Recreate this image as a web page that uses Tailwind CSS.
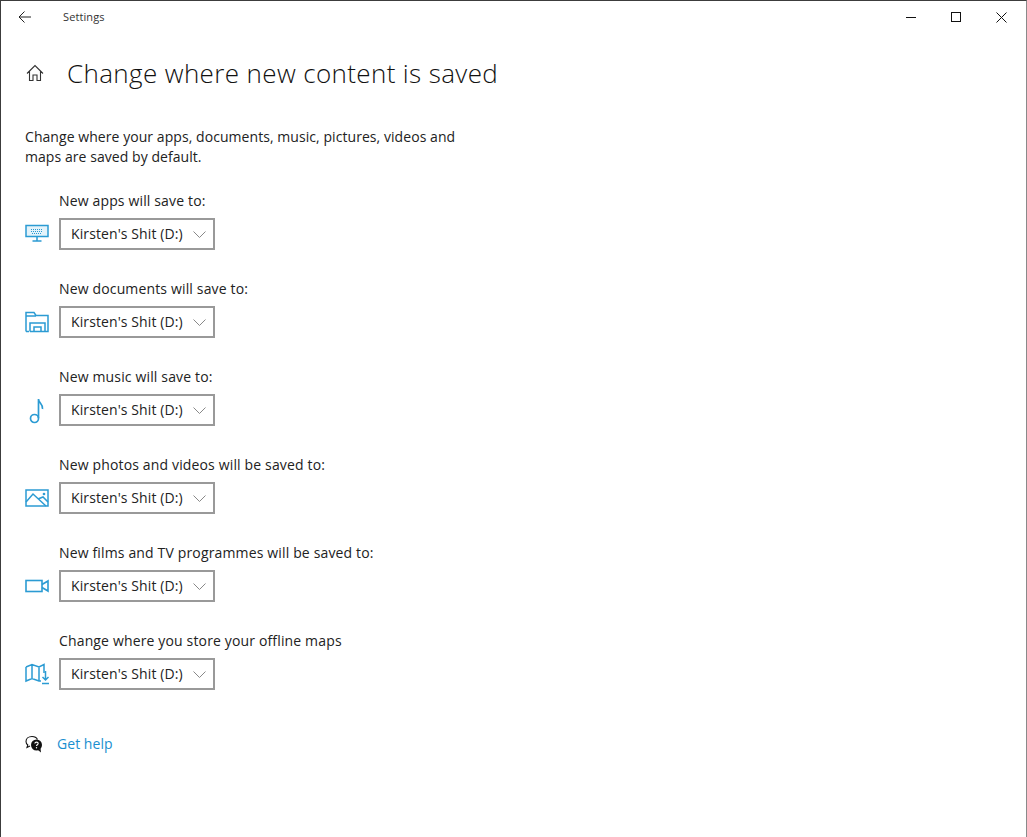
<!DOCTYPE html>
<html lang="en">
  <head>
    <meta charset="UTF-8" />
    <title>Settings</title>
    <script src="https://cdn.jsdelivr.net/npm/@tailwindcss/browser@4"></script>
  </head>
  <body class="bg-white text-[#1a1a1a] font-['Open_Sans',sans-serif]">
    <div class="w-[1027px] h-[837px] overflow-hidden bg-white border-l border-t border-r border-l-[#3c3c3c] border-t-[#3c3c3c] border-r-[#8a8a8a]">
      <!-- Title bar -->
      <div class="flex items-center h-[32px]">
        <div class="w-[62px] pl-[16px] flex">
          <svg width="16" height="14" viewBox="0 0 16 14" fill="none" stroke="#222" stroke-width="1"><path d="M14 7H2M7.500 1.500 2 7l5.500 5.500" /></svg>
        </div>
        <span class="text-[11px] tracking-[0.1px] text-[#333]">Settings</span>
        <div class="ml-auto flex items-center gap-[35px] pr-[19px]">
          <svg width="10" height="10" viewBox="0 0 10 10" stroke="#111" fill="none"><path d="M0 5.500H10" /></svg>
          <svg width="10" height="10" viewBox="0 0 10 10" stroke="#111" fill="none"><rect x="0.500" y="0.500" width="9" height="9" /></svg>
          <svg width="11" height="11" viewBox="0 0 11 11" stroke="#111" fill="none"><path d="M.5.500l10 10M10.500.500l-10 10" /></svg>
        </div>
      </div>

      <!-- Page header -->
      <div class="flex items-center h-[38px] mt-[21px] pl-[25px]">
        <svg width="18" height="18" viewBox="0 0 18 18" fill="none" stroke="#333" stroke-width="1.100" class="mr-[23px]"><path d="M1 9.500 9 1.500l8 8M3.500 7.500V16.500H7V11h4v5.500h3.500V7.500" /></svg>
        <h1 class="text-[26px] font-light tracking-[0.37px] text-[#111]">Change where new content is saved</h1>
      </div>

      <p class="mt-[35px] ml-[24px] text-[14px] leading-[20px] w-[450px] tracking-[0.06px] text-[#222]">Change where your apps, documents, music, pictures, videos and maps are saved by default.</p>

      <!-- Save locations -->
      <div class="mt-[24px] ml-[24px] flex flex-col gap-[29px]">
        <div>
          <div class="ml-[34px] h-[20px] text-[14px] leading-[20px] tracking-[0.15px] text-[#222]">New apps will save to:</div>
          <div class="flex items-center mt-[7px]">
            <div class="w-[34px]">
              <svg width="24" height="20" viewBox="0 0 24 20" fill="none" stroke="#2b9bd3" stroke-width="1.500"><rect x="1" y="1.500" width="22" height="11" fill="#e4f3fa" /><path d="M12 12.500V17M7.500 17h9" /><path d="M6 5.500h12M6 7.500h12M7 9.500h10" stroke-width="1.200" stroke-dasharray="1 1" /></svg>
            </div>
            <button class="w-[156px] h-[32px] border-2 border-[#999] flex items-center pl-[10px] pb-[2px] text-[14px] tracking-[0.1px] text-[#222]">Kirsten's Shit (D:)<svg class="ml-auto mr-[7px] mt-[2px]" width="13" height="7" viewBox="0 0 13 7" fill="none" stroke="#888"><path d="M.5.500l6 6 6-6" /></svg></button>
          </div>
        </div>
        <div>
          <div class="ml-[34px] h-[20px] text-[14px] leading-[20px] tracking-[0.15px] text-[#222]">New documents will save to:</div>
          <div class="flex items-center mt-[7px]">
            <div class="w-[34px]">
              <svg width="24" height="22" viewBox="0 0 24 22" fill="none" stroke="#2b9bd3" stroke-width="1.500"><path d="M1 20.500V1.500h8l2 3h12v16h-3M1 20.500h3M1 5h10" /><path d="M5 20.500V12h15v8.500M9 20.500V16h7v4.500M5 20.500h15" /></svg>
            </div>
            <button class="w-[156px] h-[32px] border-2 border-[#999] flex items-center pl-[10px] pb-[2px] text-[14px] tracking-[0.1px] text-[#222]">Kirsten's Shit (D:)<svg class="ml-auto mr-[7px] mt-[2px]" width="13" height="7" viewBox="0 0 13 7" fill="none" stroke="#888"><path d="M.5.500l6 6 6-6" /></svg></button>
          </div>
        </div>
        <div>
          <div class="ml-[34px] h-[20px] text-[14px] leading-[20px] tracking-[0.15px] text-[#222]">New music will save to:</div>
          <div class="flex items-center mt-[7px]">
            <div class="w-[34px]">
              <svg width="24" height="28" viewBox="0 0 24 28" fill="none" stroke="#2b9bd3" stroke-width="1.700"><circle cx="9.500" cy="22.500" r="4" /><path d="M13.500 22V3c0 4 5 5 4 10" /></svg>
            </div>
            <button class="w-[156px] h-[32px] border-2 border-[#999] flex items-center pl-[10px] pb-[2px] text-[14px] tracking-[0.1px] text-[#222]">Kirsten's Shit (D:)<svg class="ml-auto mr-[7px] mt-[2px]" width="13" height="7" viewBox="0 0 13 7" fill="none" stroke="#888"><path d="M.5.500l6 6 6-6" /></svg></button>
          </div>
        </div>
        <div>
          <div class="ml-[34px] h-[20px] text-[14px] leading-[20px] tracking-[0.15px] text-[#222]">New photos and videos will be saved to:</div>
          <div class="flex items-center mt-[7px]">
            <div class="w-[34px]">
              <svg width="24" height="18" viewBox="0 0 24 18" fill="none" stroke="#2b9bd3" stroke-width="1.500"><rect x="1" y="1" width="22" height="16" /><path d="M1 13l7-8 13 12M13 10l5-2 5 5" /><circle cx="19" cy="5" r=".6" /></svg>
            </div>
            <button class="w-[156px] h-[32px] border-2 border-[#999] flex items-center pl-[10px] pb-[2px] text-[14px] tracking-[0.1px] text-[#222]">Kirsten's Shit (D:)<svg class="ml-auto mr-[7px] mt-[2px]" width="13" height="7" viewBox="0 0 13 7" fill="none" stroke="#888"><path d="M.5.500l6 6 6-6" /></svg></button>
          </div>
        </div>
        <div>
          <div class="ml-[34px] h-[20px] text-[14px] leading-[20px] tracking-[0.15px] text-[#222]">New films and TV programmes will be saved to:</div>
          <div class="flex items-center mt-[7px]">
            <div class="w-[34px]">
              <svg width="24" height="14" viewBox="0 0 24 14" fill="none" stroke="#2b9bd3" stroke-width="1.600"><rect x="1" y="1.500" width="16" height="11" /><path d="M17 5.500 23 2v10l-6-3.500" /></svg>
            </div>
            <button class="w-[156px] h-[32px] border-2 border-[#999] flex items-center pl-[10px] pb-[2px] text-[14px] tracking-[0.1px] text-[#222]">Kirsten's Shit (D:)<svg class="ml-auto mr-[7px] mt-[2px]" width="13" height="7" viewBox="0 0 13 7" fill="none" stroke="#888"><path d="M.5.500l6 6 6-6" /></svg></button>
          </div>
        </div>
        <div>
          <div class="ml-[34px] h-[20px] text-[14px] leading-[20px] tracking-[0.15px] text-[#222]">Change where you store your offline maps</div>
          <div class="flex items-center mt-[7px]">
            <div class="w-[34px]">
              <svg width="25" height="22" viewBox="0 0 25 22" fill="none" stroke="#2b9bd3" stroke-width="1.500"><path d="M1 4 7 1.500l7 2.500 5-2.500V10M14 4v14M7 1.500v14M1 4v14l6-2.500 7 2.500h2" /><path d="M20.500 8v9M17.500 14l3 3 3-3M17 20.500h7" /></svg>
            </div>
            <button class="w-[156px] h-[32px] border-2 border-[#999] flex items-center pl-[10px] pb-[2px] text-[14px] tracking-[0.1px] text-[#222]">Kirsten's Shit (D:)<svg class="ml-auto mr-[7px] mt-[2px]" width="13" height="7" viewBox="0 0 13 7" fill="none" stroke="#888"><path d="M.5.500l6 6 6-6" /></svg></button>
          </div>
        </div>
      </div>

      <!-- Help -->
      <div class="flex items-center mt-[44px] ml-[24px]">
        <svg width="18" height="18" viewBox="0 0 18 18" class="mr-[14px]"><path d="M7 1.500C3.500 1.500 1 3.500 1 6.500c0 1.500.7 2.700 1.800 3.500L2 12.500l3-1.500" fill="none" stroke="#111" stroke-width="1.100" /><path d="M7 1.500c2.500 0 4.500 1 5.500 3" fill="none" stroke="#111" stroke-width="1.100" /><circle cx="11.500" cy="10" r="5.500" fill="#111" /><path d="M13 15l3 2.500-.5-4z" fill="#111" /><path d="M9.800 8.500c.2-1.800 3.400-1.800 3.400 0 0 1.200-1.700 1.200-1.700 2.500" fill="none" stroke="#fff" stroke-width="1.100" /><circle cx="11.500" cy="12.800" r=".7" fill="#fff" /></svg>
        <a href="#" class="text-[14px] leading-[20px] tracking-[0.05px] text-[#1a8fd0]">Get help</a>
      </div>
    </div>
  </body>
</html>
